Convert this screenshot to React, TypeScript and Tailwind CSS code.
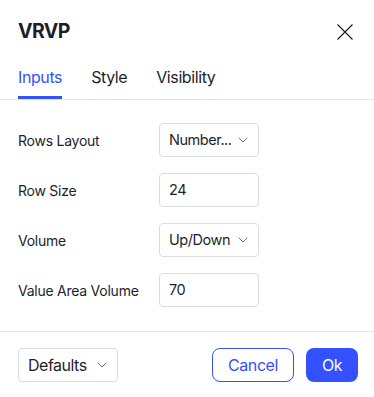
import { useState } from 'react';

function Chevron() {
    return (
        <svg width="10" height="6" viewBox="0 0 10 6" fill="none" className="shrink-0">
            <path d="M1 1l4 4 4-4" stroke="#6b7280" strokeWidth="1" strokeLinecap="round" strokeLinejoin="round" />
        </svg>
    );
}

function SelectBox({ value, big = false }: { value: string; big?: boolean }) {
    return (
        <div className="w-[100px] h-[34px] flex items-center justify-between pl-[9px] pr-[10px] border border-[#dcdde2] rounded-[4px] bg-white">
            <span className={`${big ? 'text-[16px] tracking-[-0.5px]' : 'text-[14.5px] tracking-[-0.45px]'} text-[#1c1f2b] whitespace-nowrap`}>{value}</span>
            <Chevron />
        </div>
    );
}

function TextBox({ value }: { value: string }) {
    return (
        <div className="w-[100px] h-[34px] flex items-center pl-[9px] border border-[#dcdde2] rounded-[4px] bg-white">
            <span className="text-[14.5px] tracking-[-0.45px] text-[#1c1f2b]">{value}</span>
        </div>
    );
}

export default function App() {
    const [tab, setTab] = useState('Inputs');
    const tabs = ['Inputs', 'Style', 'Visibility'];

    return (
        <main className="w-[374px] h-[397px] bg-white flex flex-col font-['Inter',sans-serif] text-[#1c1f2b] overflow-hidden">
            <header className="h-[64px] shrink-0 flex items-center justify-between px-[18px]">
                <h1 className="text-[19.5px] font-bold tracking-[-0.6px]">VRVP</h1>
                <button className="w-[16px] h-[16px] flex items-center justify-center mr-[3px]">
                    <svg width="16" height="16" viewBox="0 0 16 16" fill="none">
                        <path d="M0.5 0.5l15 15M15.5 0.5l-15 15" stroke="#1c1f2b" strokeWidth="1.2" />
                    </svg>
                </button>
            </header>

            <nav className="h-[36px] shrink-0 flex gap-[29px] px-[18px] border-b border-[#e3e4e8]">
                {tabs.map(t => (
                    <button key={t} onClick={() => setTab(t)} className="h-full flex flex-col justify-between">
                        <span className={`text-[16px] tracking-[-0.4px] leading-[24px] pt-[1px] ${tab === t ? 'text-[#3451ff]' : 'text-[#1c1f2b]'}`}>{t}</span>
                        <span className={`h-[3px] w-full ${tab === t ? 'bg-[#3451ff]' : 'bg-transparent'}`} />
                    </button>
                ))}
            </nav>

            <section className="flex-1 flex flex-col gap-[16px] px-[18px] pt-[23px]">
                <div className="flex items-center">
                    <span className="w-[141px] text-[14px] tracking-[-0.25px]">Rows Layout</span>
                    <SelectBox value="Number..." />
                </div>
                <div className="flex items-center">
                    <span className="w-[141px] text-[14px] tracking-[-0.25px]">Row Size</span>
                    <TextBox value="24" />
                </div>
                <div className="flex items-center">
                    <span className="w-[141px] text-[14px] tracking-[-0.25px]">Volume</span>
                    <SelectBox value="Up/Down" />
                </div>
                <div className="flex items-center">
                    <span className="w-[141px] text-[14px] tracking-[-0.25px]">Value Area Volume</span>
                    <TextBox value="70" />
                </div>
            </section>

            <footer className="h-[66px] shrink-0 border-t border-[#e3e4e8] flex items-start justify-between px-[16px] pt-[16px]">
                <div className="ml-[2px]">
                    <SelectBox value="Defaults" big />
                </div>
                <div className="flex gap-[12px]">
                    <button className="w-[82px] h-[34px] rounded-[8px] border border-[#3451ff] text-[#3451ff] text-[16px] tracking-[-0.4px]">Cancel</button>
                    <button className="w-[52px] h-[34px] rounded-[8px] bg-[#3451ff] text-white text-[16px] tracking-[-0.4px]">Ok</button>
                </div>
            </footer>
        </main>
    );
}
